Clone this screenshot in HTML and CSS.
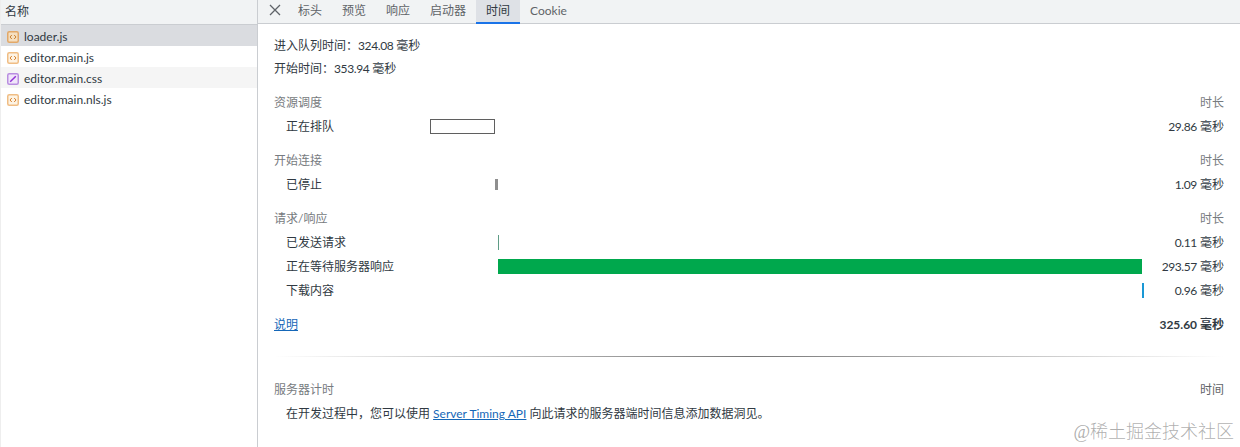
FILE: index.html
```html
<!DOCTYPE html>
<html lang="zh-CN">

<head>
    <meta charset="UTF-8">
    <title>时间</title>
    <link rel="stylesheet" href="styles.css">
</head>

<body>
    <div class="sidebar">
        <div class="sidebar-head">名称</div>
        <div class="file file-selected">
            <svg class="file-icon" viewBox="0 0 12 12"><rect x="0.75" y="0.75" width="10.5" height="10.5" rx="1.5" fill="#f5dfc0" stroke="#e2a868" stroke-width="1.5"/><path d="M4.8 4 3 6l1.8 2M7.2 4 9 6 7.2 8" fill="none" stroke="#c9802f"/></svg>
            <span>loader.js</span>
        </div>
        <div class="file">
            <svg class="file-icon" viewBox="0 0 12 12"><rect x="0.75" y="0.75" width="10.5" height="10.5" rx="1.5" fill="#fdf3e4" stroke="#f0bd84" stroke-width="1.5"/><path d="M4.8 4 3 6l1.8 2M7.2 4 9 6 7.2 8" fill="none" stroke="#d9822b"/></svg>
            <span>editor.main.js</span>
        </div>
        <div class="file file-even">
            <svg class="file-icon" viewBox="0 0 12 12"><rect x="0.75" y="0.75" width="10.5" height="10.5" rx="1.5" fill="#f0e6fa" stroke="#b98ee0" stroke-width="1.5"/><path d="M3.2 8.8 8.8 3.2" fill="none" stroke="#9334d6" stroke-width="1.5"/></svg>
            <span>editor.main.css</span>
        </div>
        <div class="file">
            <svg class="file-icon" viewBox="0 0 12 12"><rect x="0.75" y="0.75" width="10.5" height="10.5" rx="1.5" fill="#fdf3e4" stroke="#f0bd84" stroke-width="1.5"/><path d="M4.8 4 3 6l1.8 2M7.2 4 9 6 7.2 8" fill="none" stroke="#d9822b"/></svg>
            <span>editor.main.nls.js</span>
        </div>
    </div>

    <div class="main">
        <div class="tabs">
            <svg class="close" viewBox="0 0 12 12"><path d="M1 1l10 10M11 1 1 11" fill="none" stroke="#5f6368" stroke-width="1.3"/></svg>
            <div class="tab">标头</div>
            <div class="tab">预览</div>
            <div class="tab">响应</div>
            <div class="tab">启动器</div>
            <div class="tab tab-active">时间</div>
            <div class="tab">Cookie</div>
        </div>

        <div class="content">
            <div class="summary">进入队列时间：<span class="num">324.08</span> 毫秒</div>
            <div class="summary">开始时间：<span class="num">353.94</span> 毫秒</div>

            <div class="group">
                <div class="row row-head"><span>资源调度</span><span>时长</span></div>
                <div class="row">
                    <span class="label">正在排队</span>
                    <div class="track"><div class="bar bar-queue" style="margin-left: 0; width: 65px"></div></div>
                    <span class="time"><span class="num">29.86</span> 毫秒</span>
                </div>
            </div>

            <div class="group">
                <div class="row row-head"><span>开始连接</span><span>时长</span></div>
                <div class="row">
                    <span class="label">已停止</span>
                    <div class="track"><div class="bar bar-stalled" style="margin-left: 65px; width: 3px"></div></div>
                    <span class="time"><span class="num">1.09</span> 毫秒</span>
                </div>
            </div>

            <div class="group">
                <div class="row row-head"><span>请求/响应</span><span>时长</span></div>
                <div class="row">
                    <span class="label">已发送请求</span>
                    <div class="track"><div class="bar bar-sent" style="margin-left: 68px; width: 1px"></div></div>
                    <span class="time"><span class="num">0.11</span> 毫秒</span>
                </div>
                <div class="row">
                    <span class="label">正在等待服务器响应</span>
                    <div class="track"><div class="bar bar-wait" style="margin-left: 68px; width: 644px"></div></div>
                    <span class="time"><span class="num">293.57</span> 毫秒</span>
                </div>
                <div class="row">
                    <span class="label">下载内容</span>
                    <div class="track"><div class="bar bar-download" style="margin-left: 712px; width: 2px"></div></div>
                    <span class="time"><span class="num">0.96</span> 毫秒</span>
                </div>
            </div>

            <div class="row total">
                <a href="#">说明</a>
                <b>325.60 毫秒</b>
            </div>

            <div class="divider"></div>

            <div class="row row-head"><span>服务器计时</span><span class="dark">时间</span></div>
            <div class="row server-note">
                <span>在开发过程中，您可以使用 <a href="#">Server Timing API</a> 向此请求的服务器端时间信息添加数据洞见。</span>
            </div>
        </div>
    </div>

    <div class="watermark">@稀土掘金技术社区</div>
</body>

</html>
```
FILE: styles.css
```css
* {
    box-sizing: border-box;
}

html,
body {
    height: 100%;
}

body {
    margin: 0;
    display: flex;
    overflow: hidden;
    position: relative;
    font-family: Lato, "Noto Sans CJK SC", sans-serif;
    font-size: 12px;
    color: #303942;
    background: white;
}

a {
    color: #1567b8;
}

.sidebar {
    width: 258px;
    flex: none;
    border-right: 1px solid #cacdd1;
    border-left: 1px solid #eeeeee;
}

.sidebar-head {
    height: 25px;
    padding-left: 4px;
    line-height: 23px;
    background: #f1f3f4;
    border-bottom: 1px solid #cacdd1;
}

.file {
    display: flex;
    align-items: center;
    gap: 5px;
    height: 21px;
    padding-left: 6px;
}

.file span {
    margin-top: 2px;
}

.file-selected {
    background: #dadce0;
}

.file-even {
    background: #f5f5f5;
}

.file-icon {
    width: 12px;
    height: 12px;
    margin-top: 2px;
}

.main {
    flex: 1;
    min-width: 0;
}

.tabs {
    display: flex;
    height: 24px;
    background: #f1f3f4;
    border-bottom: 1px solid #cacdd1;
}

.close {
    width: 12px;
    height: 12px;
    margin: 4px 7px 0 11px;
}

.tab {
    height: 24px;
    padding: 0 10px;
    line-height: 22px;
    color: #5f6368;
}

.tab-active {
    color: #303942;
    background: #dee1e6;
    border-bottom: 2px solid #1a73e8;
}

.content {
    padding: 10px 16px 0 16px;
}

.summary {
    height: 23px;
    line-height: 24px;
}

.num {
    letter-spacing: -0.4px;
}

.group {
    margin-bottom: 10px;
}

.summary + .group {
    margin-top: 10px;
}

.row {
    display: flex;
    align-items: flex-start;
    justify-content: space-between;
    height: 24px;
    line-height: 25px;
}

.row-head {
    color: #777b80;
}

.row-head .dark {
    color: #5f6368;
}

.label {
    width: 156px;
    flex: none;
    padding-left: 12px;
}

.track {
    flex: 1;
    min-width: 0;
    align-self: center;
}

.bar {
    height: 15px;
}

.bar-queue {
    background: white;
    border: 1px solid #5f5f5f;
}

.bar-stalled {
    height: 11px;
    background: #8f8f8f;
}

.bar-sent {
    background: #5f9c86;
}

.bar-wait {
    background: #00a84d;
}

.bar-download {
    background: #1a98d5;
}

.time {
    width: 80px;
    flex: none;
    text-align: right;
}

.total b {
    font-weight: 700;
}

.divider {
    height: 1px;
    margin: 20px 0 20px 0;
    background: linear-gradient(to right, #ffffff, #777777 50%, #ffffff);
}

.server-note {
    padding-left: 12px;
}

.watermark {
    position: absolute;
    right: 6px;
    bottom: 4px;
    font-family: "Liberation Serif", "Noto Sans CJK SC", serif;
    font-size: 18px;
    font-weight: 300;
    color: rgba(120, 120, 120, 0.6);
}
```
